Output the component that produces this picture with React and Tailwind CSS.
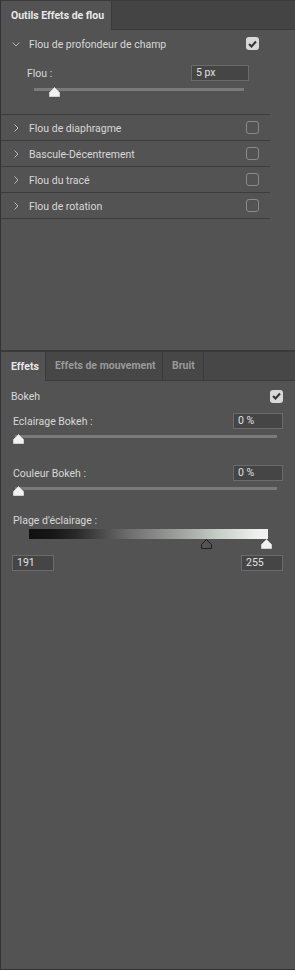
import React from 'react';

const font = { fontFamily: 'Roboto, "Liberation Sans", sans-serif' };

const Chevron = ({ open }) => (
  <svg width="8" height="8" viewBox="0 0 8 8" className="shrink-0">
    {open ? (
      <path d="M0.5 2.5 L4 6 L7.5 2.5" fill="none" stroke="#b8b8b8" strokeWidth="1" />
    ) : (
      <path d="M2.5 0.5 L6 4 L2.5 7.5" fill="none" stroke="#b8b8b8" strokeWidth="1" />
    )}
  </svg>
);

const Check = ({ on }) =>
  on ? (
    <div className="w-[13px] h-[13px] rounded-[3px] bg-[#d9d9d9] flex items-center justify-center">
      <svg width="9" height="8" viewBox="0 0 9 8">
        <path d="M1 4 L3.5 6.5 L8 1.5" fill="none" stroke="#333" strokeWidth="2" />
      </svg>
    </div>
  ) : (
    <div className="w-[13px] h-[13px] rounded-[3px] border border-[#8a8a8a]" />
  );

const Thumb = ({ outline }) => (
  <svg width="11" height="10" viewBox="0 0 11 10">
    <path
      d="M5.5 0.5 L10.5 5.5 L10.5 9.5 L0.5 9.5 L0.5 5.5 Z"
      fill={outline ? 'none' : '#f2f2f2'}
      stroke={outline ? '#1e1e1e' : '#cfcfcf'}
      strokeWidth="1"
      strokeLinejoin="round"
    />
  </svg>
);

const Slider = ({ left, width, pos }) => (
  <div className="relative h-[10px]" style={{ marginLeft: left, width }}>
    <div className="absolute left-0 right-0 top-[3px] h-[3px] bg-[#7a7a7a]" />
    <div className="absolute top-[2px]" style={{ left: pos - 5 }}>
      <Thumb />
    </div>
  </div>
);

const Field = ({ value, w }) => (
  <div
    className="h-[16px] bg-[#454545] border border-[#6b6b6b] text-[#e0e0e0] text-[10.5px] leading-[14px] pl-[4px]"
    style={{ width: w }}
  >
    {value}
  </div>
);

const rows = ['Flou de diaphragme', 'Bascule-Décentrement', 'Flou du tracé', 'Flou de rotation'];

export default function App() {
  return (
    <div className="w-[295px] h-[970px] bg-[#535353] border-l border-b border-[#323232] text-[#d8d8d8] text-[10.5px] whitespace-nowrap flex flex-col" style={font}>
      {/* top tabs */}
      <div className="h-[30px] flex bg-[#444444] border-t border-[#3a3a3a] shrink-0">
        <div className="w-[111px] bg-[#535353] border-r border-[#3a3a3a] flex items-center pl-[10px] pt-px font-bold text-[#e8e8e8]">
          Outils Effets de flou
        </div>
        <div className="flex-1 border-b border-[#3a3a3a]" />
      </div>

      {/* blur list */}
      <div className="h-[320px] shrink-0 pr-[25px]">
        <div className="h-[85px] border-b border-[#3c3c3c]">
          <div className="h-[27px] flex items-center pl-[11px] pr-[11px]">
            <Chevron open />
            <span className="ml-[9px] pt-[2px] flex-1">Flou de profondeur de champ</span>
            <Check on />
          </div>
          <div className="flex items-center pl-[26px] pr-[21px] mt-[8px] h-[16px]">
            <span className="flex-1 pt-px">Flou :</span>
            <Field value="5 px" w={58} />
          </div>
          <div className="mt-[4px]">
            <Slider left={33} width={210} pos={20} />
          </div>
        </div>
        {rows.map((r) => (
          <div key={r} className="h-[26px] flex items-center border-b border-[#3c3c3c] pl-[11px] pr-[11px]">
            <Chevron />
            <span className="ml-[9px] pt-[2px] flex-1">{r}</span>
            <Check />
          </div>
        ))}
      </div>

      {/* lower panel */}
      <div className="border-t-2 border-[#3a3a3a] flex flex-col flex-1">
        <div className="h-[29px] flex bg-[#474747] border-b border-[#3a3a3a] font-bold">
          <div className="w-[45px] bg-[#535353] border-r border-[#3a3a3a] flex items-center pl-[10px] text-[#e8e8e8] -mb-px">
            Effets
          </div>
          <div className="w-[117px] border-r border-[#3a3a3a] flex items-center pl-[9px] text-[#9a9a9a]">
            Effets de mouvement
          </div>
          <div className="w-[41px] border-r border-[#3a3a3a] flex items-center pl-[9px] text-[#9a9a9a]">
            Bruit
          </div>
        </div>

        <div className="flex items-center pl-[10px] pr-[12px] mt-[8px] h-[14px]">
          <span className="flex-1 pt-px">Bokeh</span>
          <Check on />
        </div>

        <div className="flex items-center pl-[12px] pr-[12px] mt-[10px] h-[16px]">
          <span className="flex-1 pt-px">Eclairage Bokeh :</span>
          <Field value="0 %" w={50} />
        </div>
        <div className="mt-[3px]">
          <Slider left={14} width={262} pos={3} />
        </div>

        <div className="flex items-center pl-[12px] pr-[12px] mt-[23px] h-[16px]">
          <span className="flex-1 pt-px">Couleur Bokeh :</span>
          <Field value="0 %" w={50} />
        </div>
        <div className="mt-[3px]">
          <Slider left={14} width={262} pos={3} />
        </div>

        <div className="pl-[12px] mt-[20px] leading-[14px]">Plage d'éclairage :</div>
        <div className="ml-[28px] mt-[1px] w-[239px] h-[10px] bg-[linear-gradient(to_right,#101010_0%,#161616_10%,#2a2a2a_20%,#6e6e6e_42%,#a3a6a3_65%,#c9cfc9_80%,#f0f0f0_96%)]" />
        <div className="relative h-[12px] ml-[28px] w-[245px]">
          <div className="absolute top-[0px] left-[172px]">
            <Thumb outline />
          </div>
          <div className="absolute top-[0px] left-[232px]">
            <Thumb />
          </div>
        </div>
        <div className="flex justify-between pl-[11px] pr-[12px] mt-[4px]">
          <Field value="191" w={42} />
          <Field value="255" w={42} />
        </div>
      </div>
    </div>
  );
}
